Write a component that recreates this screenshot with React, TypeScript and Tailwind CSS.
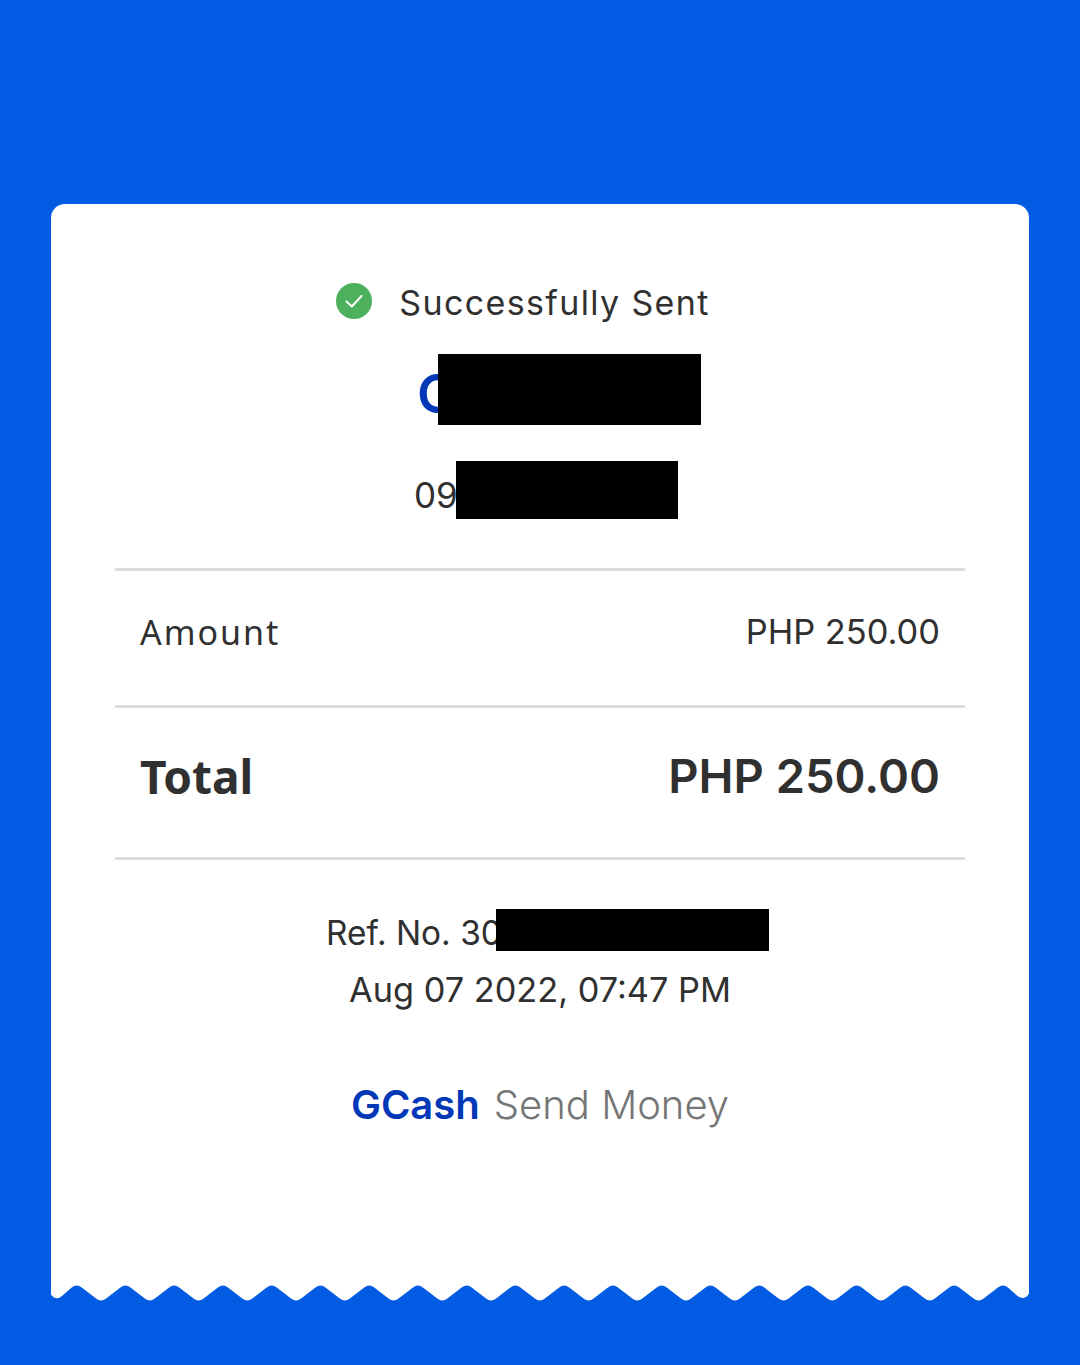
import React from 'react';

const bodyFont = "font-['Inter','Liberation_Sans',sans-serif]";

// scalloped tear-off edge along the bottom of the receipt
const buildWavePath = () => {
  const period = 48.75;
  const first = 25.7; // first blue peak, measured from the card's left edge
  let d = 'M0 0 L978 0 L978 8.5 Q976 12.5 972 13 Q969 13 966.5 11 ';
  const peaks: number[] = [];
  for (let i = 19; i >= 0; i--) peaks.push(first + i * period);
  peaks.forEach((x, i) => {
    d += `L${x + 5} 2.4 Q${x} -1.5 ${x - 5} 2.4 `;
    const v = x - period / 2;
    if (i < peaks.length - 1) d += `L${v + 5} 13.6 Q${v} 17.5 ${v - 5} 13.6 `;
  });
  d += 'L11 11 Q7 14.5 3 12.5 Q1 11 0 9.5 Z';
  return d;
};

const Divider = () => <div className="h-[3px] bg-[#dcdcdc]" />;

const App: React.FC = () => {
  return (
    <div className="min-h-[1365px] bg-[#015be3] px-[51px] pt-[204px]">
      <div className="rounded-t-[14px] bg-white h-[1081px] flex flex-col">
        <div className={`mt-[76px] h-[46px] pr-[34px] flex items-center justify-center gap-[27px] ${bodyFont}`}>
          <svg width="36" height="36" viewBox="0 0 36 36" className="-mt-[4px]">
            <circle cx="18" cy="18" r="18" fill="#4cb05c" />
            <path d="M10.5 18.5 L15.8 23.5 L25.5 13" fill="none" stroke="#fff" strokeWidth="2" strokeLinecap="round" strokeLinejoin="round" />
          </svg>
          <span className="text-[34px] leading-[46px] tracking-[1.35px] text-[#303030]">Successfully Sent</span>
        </div>

        <div className="mt-[28px] h-[71px] flex justify-center">
          <div className="pl-[366px] w-full flex items-center">
            <span className="pt-[8px] text-[54px] font-semibold leading-none text-[#0038b8] font-['Inter',sans-serif]">C</span>
            <div className="-ml-[19px] w-[263px] h-[71px] bg-black shrink-0" />
          </div>
        </div>

        <div className="mt-[36px] h-[58px] pl-[363px] flex items-center">
          <span className={`pt-[10px] text-[35px] text-[#303030] ${bodyFont}`}>09</span>
          <div className="-ml-[2px] w-[222px] h-[58px] bg-black shrink-0" />
        </div>

        <div className="mt-[49px] mx-[64px] flex flex-col">
          <Divider />
          <div className="h-[134px] px-[25px] pb-[12px] flex items-center justify-between text-[#303030]">
            <span className="text-[34px] tracking-[2px]">Amount</span>
            <span className={`text-[34.4px] ${bodyFont}`}>PHP 250.00</span>
          </div>
          <Divider />
          <div className="h-[149px] px-[25px] pb-[12px] flex items-center justify-between text-[#303030]">
            <span className="text-[46px] font-bold">Total</span>
            <span className={`text-[47px] font-semibold ${bodyFont}`}>PHP 250.00</span>
          </div>
          <Divider />
        </div>

        <div className={`mt-[49px] h-[42px] pl-[275px] flex items-center text-[#303030] ${bodyFont}`}>
          <span className="pt-[6px] text-[33.4px] whitespace-nowrap">Ref. No. 30</span>
          <div className="-ml-[6px] w-[273px] h-[42px] bg-black shrink-0" />
        </div>
        <div className={`mt-[15px] text-center text-[34.3px] leading-[48px] text-[#303030] ${bodyFont}`}>
          Aug 07 2022, 07:47 PM
        </div>
        <div className={`mt-[66px] flex justify-center items-center gap-[14px] text-[40px] leading-[50px] ${bodyFont}`}>
          <span className="font-semibold text-[#0038b8]">GCash</span>
          <span className="font-light text-[#757575]">Send Money</span>
        </div>
      </div>
      <svg width="978" height="17" viewBox="0 0 978 17" className="block">
        <path d={buildWavePath()} fill="#fff" />
      </svg>
    </div>
  );
};

export default App;
